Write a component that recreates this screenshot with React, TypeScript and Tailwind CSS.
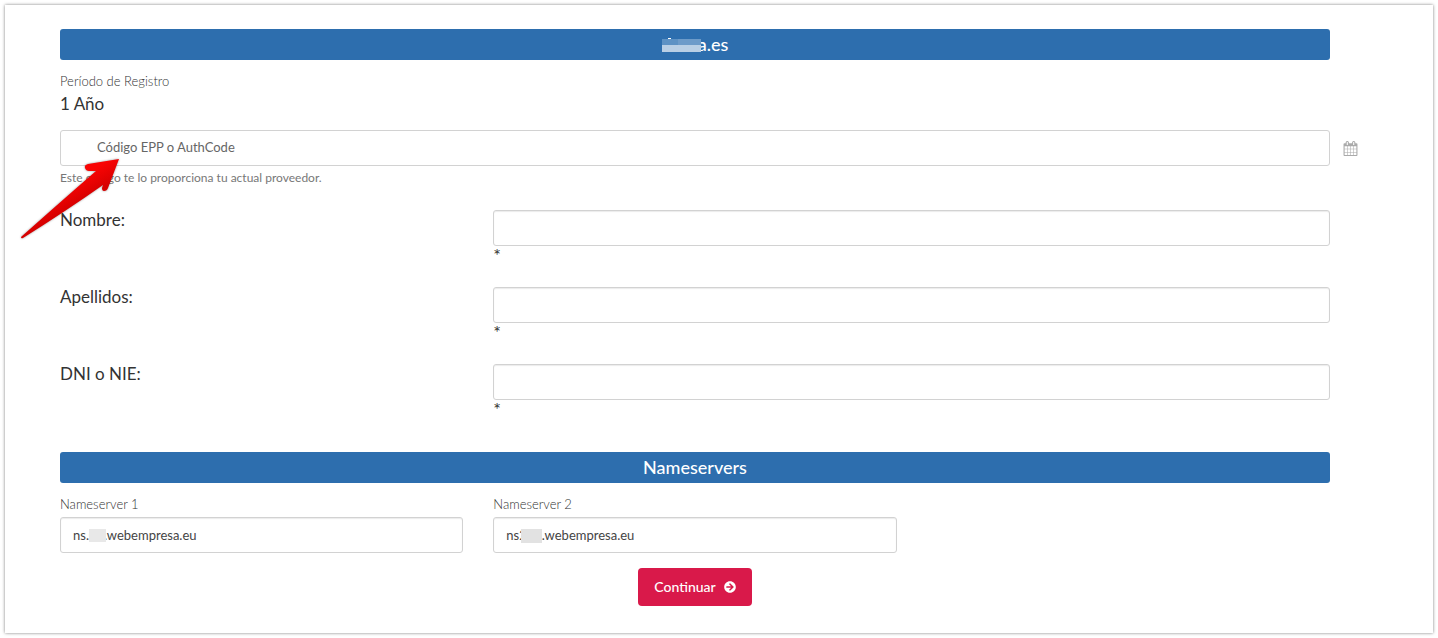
import React from "react";
import { FaArrowCircleRight } from "react-icons/fa";

const inputClass =
  "block h-9 w-full rounded-[3px] border border-[#d2d2d2] bg-white px-3 text-[13px] text-[#444] shadow-[inset_0_1px_1px_rgba(0,0,0,0.08)] outline-none";

const contactFields = [
  { id: "nombre", label: "Nombre:" },
  { id: "apellidos", label: "Apellidos:" },
  { id: "dni", label: "DNI o NIE:" },
];

function CalendarIcon() {
  return (
    <svg viewBox="0 0 1792 1792" className="h-[15px] w-[15px] fill-[#aaa]" aria-hidden="true">
      <path d="M192 1664h288v-288h-288v288zm352 0h320v-288h-320v288zm-352-352h288v-320h-288v320zm352 0h320v-320h-320v320zm-352-384h288v-288h-288v288zm736 736h320v-288h-320v288zm-384-736h320v-288h-320v288zm768 736h288v-288h-288v288zm-384-352h320v-320h-320v320zm-352-864v-288q0-13-9.5-22.5t-22.5-9.5h-64q-13 0-22.5 9.5t-9.5 22.5v288q0 13 9.5 22.5t22.5 9.5h64q13 0 22.5-9.5t9.5-22.5zm736 864h288v-320h-288v320zm-384-384h320v-288h-320v288zm384 0h288v-288h-288v288zm32-480v-288q0-13-9.5-22.5t-22.5-9.5h-64q-13 0-22.5 9.5t-9.5 22.5v288q0 13 9.5 22.5t22.5 9.5h64q13 0 22.5-9.5t9.5-22.5zm384-64v1280q0 52-38 90t-90 38h-1408q-52 0-90-38t-38-90v-1280q0-52 38-90t90-38h128v-96q0-66 47-113t113-47h64q66 0 113 47t47 113v96h384v-96q0-66 47-113t113-47h64q66 0 113 47t47 113v96h128q52 0 90 38t38 90z" />
    </svg>
  );
}

function Arrow() {
  return (
    <svg
      viewBox="0 0 104 84"
      className="pointer-events-none absolute top-[27px] -left-10 h-[84px] w-[104px] drop-shadow-[0_0_1px_rgba(0,0,0,0.4)]"
      aria-hidden="true"
    >
      <defs>
        <linearGradient id="arrow" x1="0.45" y1="0.35" x2="0.6" y2="0.55">
          <stop offset="0" stopColor="#f90404" />
          <stop offset="1" stopColor="#d60000" />
        </linearGradient>
      </defs>
      <path
        d="M99 2 L68 7 Q64 8 65 11 Q66 14 69 14 L76 14 Q46 40 1 80 Q1 82 3 81 Q46 54 83 28 L82 31 Q82 34 84 34 Q87 34 88 31 Z"
        fill="url(#arrow)"
      />
    </svg>
  );
}

function SectionTitle({ children }: { children: React.ReactNode }) {
  return (
    <h2 className="flex h-[31px] items-center justify-center rounded-[3px] bg-[#2d6eae] pb-0.5 text-lg font-medium text-white">
      {children}
    </h2>
  );
}

export default function App() {
  return (
    <div className="bg-white p-[5px] font-['Lato',sans-serif] text-[#333]">
      <form className="bg-white pt-6 pr-[103px] pb-[27px] pl-[55px] shadow-[0_0_3px_rgba(0,0,0,0.5)]">
        <SectionTitle>
          <span className="relative pl-9">
            <span className="absolute top-2 left-1.5 h-0.5 w-[3px] bg-white" />
            <span className="absolute top-[9px] left-0 block h-[13px] w-[39px] bg-[#b9cfe5]">
              <span className="flex h-[6px]">
                <span className="w-4 bg-[#5e92c4]" />
                <span className="flex-1 bg-[#6d9bc9]" />
              </span>
            </span>
            a.es
          </span>
        </SectionTitle>

        <p className="mt-[11px] text-[13px] leading-5 font-light text-[#333]">Período de Registro</p>
        <p className="text-[17px] leading-[26px]">1 Año</p>

        <div className="relative mt-[13px]">
          <input
            type="text"
            aria-label="Código EPP o AuthCode"
            placeholder="Código EPP o AuthCode"
            className="block h-9 w-full rounded-[3px] border border-[#d2d2d2] px-9 pb-0.5 text-[13px] outline-none placeholder:text-[#666]"
          />
          <span className="absolute top-[11px] -right-7">
            <CalendarIcon />
          </span>
          <p className="mt-1 text-xs leading-4 text-[#777]">
            Este código te lo proporciona tu actual proveedor.
          </p>
          <Arrow />
        </div>

        <div className="mt-6">
          {contactFields.map((field) => (
            <div key={field.id} className="mb-[23px] grid grid-cols-3 gap-x-[30px]">
              <label htmlFor={field.id} className="text-[17px] leading-5">
                {field.label}
              </label>
              <div className="col-span-2">
                <input id={field.id} type="text" className={inputClass} />
                <p className="text-lg leading-[18px]">*</p>
              </div>
            </div>
          ))}
        </div>

        <div className="mt-[34px]">
          <SectionTitle>Nameservers</SectionTitle>
        </div>

        <div className="mt-[11px] grid grid-cols-3 gap-x-[30px]">
          <div>
            <label htmlFor="ns1" className="block text-[13px] leading-5 font-light text-[#333]">
              Nameserver 1
            </label>
            <div className="relative mt-[3px]">
              <input id="ns1" type="text" defaultValue="ns.00.webempresa.eu" className={inputClass} />
              <span className="absolute top-3 left-[29px] h-[13px] w-[17px] bg-[#e8e8e8]" />
            </div>
          </div>
          <div>
            <label htmlFor="ns2" className="block text-[13px] leading-5 font-light text-[#333]">
              Nameserver 2
            </label>
            <div className="relative mt-[3px]">
              <input id="ns2" type="text" defaultValue="ns200.webempresa.eu" className={inputClass} />
              <span className="absolute top-3 left-7 h-[14px] w-[21px] bg-[#e2e2e2]" />
            </div>
          </div>
        </div>

        <div className="mt-[15px] flex justify-center">
          <button
            type="button"
            className="flex h-[38px] items-center gap-2 rounded bg-[#d9194a] px-4 text-sm font-medium text-white"
          >
            Continuar
            <FaArrowCircleRight className="h-3 w-3" />
          </button>
        </div>
      </form>
    </div>
  );
}
